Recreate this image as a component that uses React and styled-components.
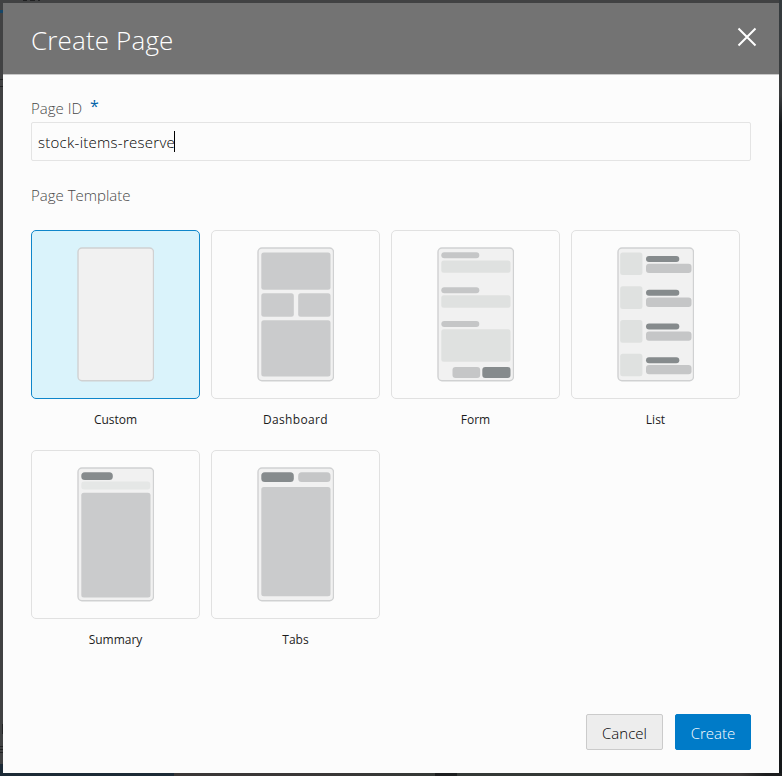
import React from "react";
import styled, { createGlobalStyle } from "styled-components";

const GlobalStyle = createGlobalStyle`
  * { box-sizing: border-box; }
  body {
    margin: 0;
    font-family: "Open Sans", "Noto Sans", sans-serif;
    font-weight: 300;
    overflow: hidden;
  }
`;

const Backdrop = styled.main`
  width: 782px;
  height: 776px;
  padding: 3px;
  background:
    linear-gradient(90deg, #202122 4px, transparent 4px 7px, #202122 7px 12px, transparent 12px 15px, #202122 15px 17px, transparent 17px) 23px 0 / 24px 1px no-repeat,
    linear-gradient(#1c1e1f, #1c1e1f) 435px 773px / 22px 3px no-repeat,
    linear-gradient(90deg, #1c2a36 174px, #3a3737 174px 300px, #343836 440px 600px, #3a3737 740px, #1b1c1d 766px) 0 773px / 782px 3px no-repeat,
    linear-gradient(#174566, #174566) 0 10px / 3px 3px no-repeat,
    linear-gradient(#222324 1px, transparent 1px 7px, #222324 7px 8px) 0 79px / 3px 8px no-repeat,
    linear-gradient(#222324, #222324) 2px 724px / 1px 10px no-repeat,
    repeating-linear-gradient(#222324 0 1px, transparent 1px 3px) 0 746px / 3px 7px no-repeat,
    linear-gradient(#343a3d, #3a3c3d 95px, #15191c 125px, #0d1215 500px, #15181a) 779px 0 / 3px 776px no-repeat,
    linear-gradient(#1c2a36, #1c2a36) 0 764px / 3px 12px no-repeat,
    #414243;
`;

const Dialog = styled.section`
  display: flex;
  flex-direction: column;
  width: 776px;
  height: 770px;
  background: #fcfcfc;
`;

const Header = styled.header`
  display: flex;
  justify-content: space-between;
  height: 72px;
  padding: 0 22px 0 28px;
  background: #737373;
  border-bottom: 1px solid #c8c8c8;
`;

const Title = styled.h1`
  margin: 0;
  padding-top: 1px;
  color: #fff;
  font-size: 26px;
  font-weight: 300;
  line-height: 72px;
  letter-spacing: 0.15px;
`;

const CloseButton = styled.button`
  width: 20px;
  height: 20px;
  margin-top: 24px;
  padding: 0;
  border: 0;
  background: none;
  svg { display: block; }
`;

const Body = styled.div`
  flex: 1;
  padding: 23px 28px 0;
`;

const Label = styled.div`
  display: flex;
  height: 20px;
  color: #484848;
  font-size: 15px;
  line-height: 20px;
`;

const Required = styled.span`
  margin-left: 8px;
  color: #0063a8;
  font-size: 16px;
  font-weight: 400;
  line-height: 16px;
`;

const Field = styled.div`
  display: flex;
  align-items: center;
  height: 39px;
  margin: 4px 0 24px;
  padding-left: 6px;
  border: 1px solid #e4e4e4;
  border-radius: 2px;
  color: #000;
  font-size: 15px;
  letter-spacing: 0.27px;
`;

const Caret = styled.span`
  width: 1px;
  height: 21px;
  margin-left: -1px;
  background: #000;
`;

const Templates = styled.div`
  display: grid;
  grid-template-columns: repeat(4, 169px);
  gap: 0 11px;
  margin-top: 25px;
`;

const Template = styled.div`
  height: 220px;
  text-align: center;

  &:first-child { margin-top: 0; }
`;

const Card = styled.div`
  display: flex;
  justify-content: center;
  height: 169px;
  padding-top: 16px;
  border: 1px solid ${(p) => (p.$selected ? "#0f86ca" : "#e1e1e1")};
  border-radius: 5px;
  background: ${(p) => (p.$selected ? "#daf3fb" : "#fcfcfc")};
`;

const Caption = styled.div`
  margin-top: 11px;
  color: #1c1c1c;
  font-size: 12px;
  font-weight: 400;
  line-height: 20px;
  letter-spacing: ${(p) => p.$track || "0"};
`;

const Footer = styled.footer`
  display: flex;
  justify-content: flex-end;
  gap: 12px;
  padding: 0 28px 23px;
`;

const Button = styled.button`
  width: ${(p) => (p.$primary ? 76 : 77)}px;
  height: 36px;
  padding: 2px 0 0;
  border: 1px solid ${(p) => (p.$primary ? "#007bc8" : "#cbcbcb")};
  border-radius: 2px;
  background: ${(p) => (p.$primary ? "#007bc8" : "#ededed")};
  color: ${(p) => (p.$primary ? "#fff" : "#000")};
  font: 300 15px "Open Sans", sans-serif;
`;

const MID = "#cacbcc";
const BAR = "#c5c6c7";
const PALE = "#dfe1e0";
const DARK = "#868b8d";

/* Each block: x, y, width, height, corner radius, fill */
const templates = [
  { name: "Custom", blocks: [] },
  {
    name: "Dashboard",
    track: "0.35px",
    blocks: [
      [4.3, 5.5, 69.2, 37.3, 2.5, MID],
      [4.3, 46.2, 32.5, 23.6, 2.5, MID],
      [41.2, 46.2, 32.3, 23.6, 2.5, MID],
      [4.3, 73.2, 69.2, 56.3, 2.5, MID],
    ],
  },
  {
    name: "Form",
    blocks: [
      [4.3, 5.3, 38, 6, 3, BAR],
      [4.3, 13.5, 69.2, 12.3, 2.5, PALE],
      [4.3, 40.3, 38, 6, 3, BAR],
      [4.3, 48.3, 69.2, 12.5, 2.5, PALE],
      [4.3, 74, 38, 6, 3, BAR],
      [4.3, 82.2, 69.2, 32.6, 2.5, PALE],
      [15.5, 120, 27.7, 11, 3, BAR],
      [45.3, 120, 28.2, 11, 3, DARK],
    ],
  },
  {
    name: "List",
    blocks: [0, 33.8, 67.6, 101.2].flatMap((y) => [
      [3.2, 5.5 + y, 22.2, 22.6, 2.5, PALE],
      [29, 9 + y, 33.3, 6, 3, DARK],
      [29, 16.8 + y, 45.5, 9.3, 3, BAR],
    ]),
  },
  {
    name: "Summary",
    blocks: [
      [4.3, 5.3, 31.5, 7.6, 3.5, DARK],
      [4.3, 14.4, 69, 8.2, 3, "#e5e7e6"],
      [4.3, 25.7, 69.2, 104.8, 2.5, MID],
    ],
  },
  {
    name: "Tabs",
    blocks: [
      [4.3, 5.3, 32.5, 9.6, 3.5, DARK],
      [41.2, 5.3, 32.3, 9.6, 3.5, BAR],
      [4.3, 20, 69.2, 109.3, 2.5, MID],
    ],
  },
];

function Thumbnail({ blocks }) {
  return (
    <svg width="77" height="135" viewBox="0 0 77 135">
      <rect x="1" y="1" width="75.5" height="132.7" rx="4" fill="#f1f1f1" stroke="#d0d1d2" strokeWidth="1.4" />
      {blocks.map(([x, y, w, h, r, fill], i) => (
        <rect key={i} x={x} y={y} width={w} height={h} rx={r} fill={fill} />
      ))}
    </svg>
  );
}

export default function App() {
  return (
    <>
      <GlobalStyle />
      <Backdrop>
        <Dialog>
          <Header>
            <Title>Create Page</Title>
            <CloseButton aria-label="Close">
              <svg width="20" height="20" viewBox="0 0 20 20" stroke="#fff" strokeWidth="2">
                <path d="M1.5 1.5L18.5 18.5M18.5 1.5L1.5 18.5" />
              </svg>
            </CloseButton>
          </Header>
          <Body>
            <Label>Page ID<Required>*</Required></Label>
            <Field>stock-items-reserve<Caret /></Field>
            <Label>Page Template</Label>
            <Templates>
              {templates.map((t) => (
                <Template key={t.name}>
                  <Card $selected={t.name === "Custom"}>
                    <Thumbnail blocks={t.blocks} />
                  </Card>
                  <Caption $track={t.track}>{t.name}</Caption>
                </Template>
              ))}
            </Templates>
          </Body>
          <Footer>
            <Button>Cancel</Button>
            <Button $primary>Create</Button>
          </Footer>
        </Dialog>
      </Backdrop>
    </>
  );
}
